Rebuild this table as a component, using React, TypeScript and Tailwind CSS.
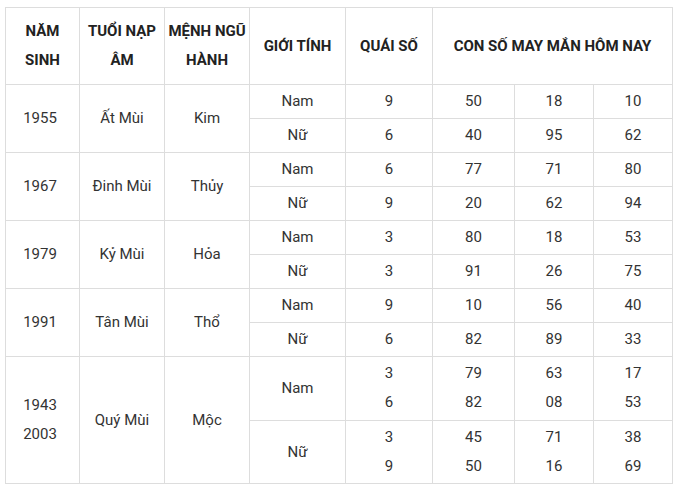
import React from 'react';

type Group = {
  year: string[];
  tuoi: string;
  menh: string;
  rows: { gender: string; quai: string[]; nums: string[][] }[];
};

const groups: Group[] = [
  {
    year: ['1955'],
    tuoi: 'Ất Mùi',
    menh: 'Kim',
    rows: [
      { gender: 'Nam', quai: ['9'], nums: [['50'], ['18'], ['10']] },
      { gender: 'Nữ', quai: ['6'], nums: [['40'], ['95'], ['62']] },
    ],
  },
  {
    year: ['1967'],
    tuoi: 'Đinh Mùi',
    menh: 'Thủy',
    rows: [
      { gender: 'Nam', quai: ['6'], nums: [['77'], ['71'], ['80']] },
      { gender: 'Nữ', quai: ['9'], nums: [['20'], ['62'], ['94']] },
    ],
  },
  {
    year: ['1979'],
    tuoi: 'Kỷ Mùi',
    menh: 'Hỏa',
    rows: [
      { gender: 'Nam', quai: ['3'], nums: [['80'], ['18'], ['53']] },
      { gender: 'Nữ', quai: ['3'], nums: [['91'], ['26'], ['75']] },
    ],
  },
  {
    year: ['1991'],
    tuoi: 'Tân Mùi',
    menh: 'Thổ',
    rows: [
      { gender: 'Nam', quai: ['9'], nums: [['10'], ['56'], ['40']] },
      { gender: 'Nữ', quai: ['6'], nums: [['82'], ['89'], ['33']] },
    ],
  },
  {
    year: ['1943', '2003'],
    tuoi: 'Quý Mùi',
    menh: 'Mộc',
    rows: [
      { gender: 'Nam', quai: ['3', '6'], nums: [['79', '82'], ['63', '08'], ['17', '53']] },
      { gender: 'Nữ', quai: ['3', '9'], nums: [['45', '50'], ['71', '16'], ['38', '69']] },
    ],
  },
];

const cell = 'border border-[#dddddd] text-center align-middle p-0 whitespace-nowrap';

function Lines({ items }: { items: string[] }) {
  return (
    <>
      {items.map((t, i) => (
        <div key={i} className="leading-[29px]">
          {t}
        </div>
      ))}
    </>
  );
}

export default function App() {
  return (
    <div className="bg-white min-h-screen pl-[5px] pt-[7px] font-['Roboto',sans-serif] text-[15px] text-[#222222]">
      <table className="border-collapse w-[667px] table-fixed">
        <colgroup>
          <col className="w-[74px]" />
          <col className="w-[85px]" />
          <col className="w-[85px]" />
          <col className="w-[96px]" />
          <col className="w-[87px]" />
          <col className="w-[82px]" />
          <col className="w-[79px]" />
          <col className="w-[79px]" />
        </colgroup>
        <thead>
          <tr className="h-[77px]">
            <th className={`${cell} font-bold leading-[29px]`}>
              NĂM
              <br />
              SINH
            </th>
            <th className={`${cell} font-bold leading-[29px]`}>
              TUỔI NẠP
              <br />
              ÂM
            </th>
            <th className={`${cell} font-bold leading-[29px]`}>
              MỆNH NGŨ
              <br />
              HÀNH
            </th>
            <th className={`${cell} font-bold`}>GIỚI TÍNH</th>
            <th className={`${cell} font-bold`}>QUÁI SỐ</th>
            <th className={`${cell} font-bold`} colSpan={3}>
              CON SỐ MAY MẮN HÔM NAY
            </th>
          </tr>
        </thead>
        <tbody className="text-[#333333]">
          {groups.map((g) =>
            g.rows.map((r, ri) => {
              const tall = r.quai.length > 1;
              return (
                <tr key={g.tuoi + ri} className={tall ? 'h-[63.5px]' : 'h-[34px]'}>
                  {ri === 0 && (
                    <>
                      <td className={`${cell} pr-[5px]`} rowSpan={2}>
                        <Lines items={g.year} />
                      </td>
                      <td className={cell} rowSpan={2}>
                        {g.tuoi}
                      </td>
                      <td className={cell} rowSpan={2}>
                        {g.menh}
                      </td>
                    </>
                  )}
                  <td className={cell}>{r.gender}</td>
                  <td className={cell}>
                    <Lines items={r.quai} />
                  </td>
                  {r.nums.map((n, ni) => (
                    <td key={ni} className={cell}>
                      <Lines items={n} />
                    </td>
                  ))}
                </tr>
              );
            })
          )}
        </tbody>
      </table>
    </div>
  );
}
